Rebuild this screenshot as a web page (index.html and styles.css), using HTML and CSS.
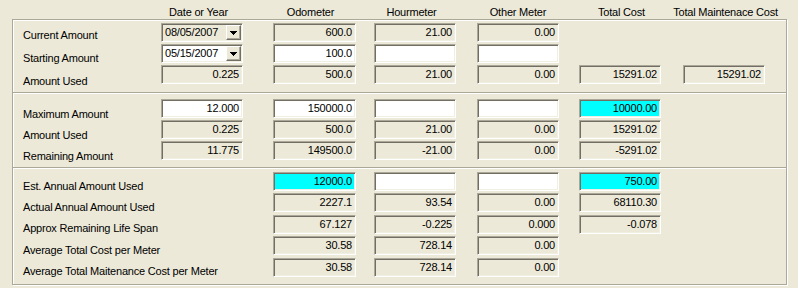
FILE: index.html
```html
<!DOCTYPE html>
<html>
<head>
<meta charset="utf-8">
<link rel="stylesheet" href="styles.css">
</head>
<body>
<div class="page">
  <div class="header">
    <span></span>
    <span class="h h-l">Date or Year</span>
    <span class="h h-l">Odometer</span>
    <span class="h h-l">Hourmeter</span>
    <span class="h">Other Meter</span>
    <span class="h h-r">Total Cost</span>
    <span class="h h-r">Total Maintenace Cost</span>
  </div>
  <div class="group">
    <div class="section s1">
      <div class="labels">
        <span>Current Amount</span>
        <span>Starting Amount</span>
        <span>Amount Used</span>
      </div>
      <div class="fld combo ro c1"><span class="val">08/05/2007</span><span class="btn"><svg width="7" height="4" viewBox="0 0 7 4" shape-rendering="crispEdges"><path d="M0 0H7V1H6V2H5V3H4V4H3V3H2V2H1V1H0Z" fill="#000"/></svg></span></div>
      <div class="fld ro c2">600.0</div>
      <div class="fld ro c3">21.00</div>
      <div class="fld ro c4">0.00</div>
      <div class="fld combo c1"><span class="val">05/15/2007</span><span class="btn"><svg width="7" height="4" viewBox="0 0 7 4" shape-rendering="crispEdges"><path d="M0 0H7V1H6V2H5V3H4V4H3V3H2V2H1V1H0Z" fill="#000"/></svg></span></div>
      <div class="fld c2">100.0</div>
      <div class="fld c3"></div>
      <div class="fld c4"></div>
      <div class="fld ro c1">0.225</div>
      <div class="fld ro c2">500.0</div>
      <div class="fld ro c3">21.00</div>
      <div class="fld ro c4">0.00</div>
      <div class="fld ro c5">15291.02</div>
      <div class="fld ro c6">15291.02</div>
    </div>
    <div class="section s2">
      <div class="labels">
        <span>Maximum Amount</span>
        <span>Amount Used</span>
        <span>Remaining Amount</span>
      </div>
      <div class="fld c1">12.000</div>
      <div class="fld c2">150000.0</div>
      <div class="fld c3"></div>
      <div class="fld c4"></div>
      <div class="fld hl c5">10000.00</div>
      <div class="fld ro c1">0.225</div>
      <div class="fld ro c2">500.0</div>
      <div class="fld ro c3">21.00</div>
      <div class="fld ro c4">0.00</div>
      <div class="fld ro c5">15291.02</div>
      <div class="fld ro c1">11.775</div>
      <div class="fld ro c2">149500.0</div>
      <div class="fld ro c3">-21.00</div>
      <div class="fld ro c4">0.00</div>
      <div class="fld ro c5">-5291.02</div>
    </div>
    <div class="section s3">
      <div class="labels">
        <span>Est. Annual Amount Used</span>
        <span>Actual Annual Amount Used</span>
        <span>Approx Remaining Life Span</span>
        <span>Average Total Cost per Meter</span>
        <span>Average Total Maitenance Cost per Meter</span>
      </div>
      <div class="fld hl c2">12000.0</div>
      <div class="fld c3"></div>
      <div class="fld c4"></div>
      <div class="fld hl c5">750.00</div>
      <div class="fld ro c2">2227.1</div>
      <div class="fld ro c3">93.54</div>
      <div class="fld ro c4">0.00</div>
      <div class="fld ro c5">68110.30</div>
      <div class="fld ro c2">67.127</div>
      <div class="fld ro c3">-0.225</div>
      <div class="fld ro c4">0.000</div>
      <div class="fld ro c5">-0.078</div>
      <div class="fld ro c2">30.58</div>
      <div class="fld ro c3">728.14</div>
      <div class="fld ro c4">0.00</div>
      <div class="fld ro c2">30.58</div>
      <div class="fld ro c3">728.14</div>
      <div class="fld ro c4">0.00</div>
    </div>
  </div>
</div>
</body>
</html>
```

FILE: styles.css
```css
html, body {
  margin: 0;
  padding: 0;
  background: #ECE9D8;
}
body {
  width: 798px;
  height: 288px;
  overflow: hidden;
  font-family: "Liberation Sans", Arial, sans-serif;
  font-size: 11px;
  letter-spacing: -0.2px;
  color: #000;
}
.header,
.section {
  display: grid;
  grid-template-columns: 148px 112px 101px 103px 102px 104px 82px;
}
.header {
  padding-left: 13px;
  height: 19px;
  box-sizing: border-box;
  padding-top: 6px;
  line-height: 13px;
}
.h {
  width: 82px;
  box-sizing: border-box;
  display: flex;
  justify-content: center;
  white-space: nowrap;
}
.h-l { padding-right: 7px; }
.h-r { padding-left: 3px; }
.group {
  margin-left: 12px;
  width: 775px;
  box-sizing: border-box;
  border: 1px solid #ACA899;
  box-shadow: inset 1px 1px 0 #fff, 1px 1px 0 #fff;
}
.section {
  grid-auto-rows: 19px;
  row-gap: 2px;
}
.s1 {
  padding: 3px 0 8px;
}
.s2 {
  padding: 6px 0 7px;
  border-top: 1px solid #ACA899;
  box-shadow: inset 0 1px 0 #fff;
}
.s3 {
  padding: 4px 0 7.4px;
  row-gap: 2.4px;
  border-top: 1px solid #ACA899;
  box-shadow: inset 0 1px 0 #fff;
}
.labels {
  grid-column: 1;
  display: flex;
  flex-direction: column;
  padding-left: 10px;
  white-space: nowrap;
}
.s1 .labels {
  grid-row: 1 / span 3;
  line-height: 23px;
  padding-top: 1px;
}
.s2 .labels {
  grid-row: 1 / span 3;
  line-height: 21px;
  padding-top: 5px;
}
.s3 .labels {
  grid-row: 1 / span 5;
  line-height: 21.4px;
  padding-top: 3.5px;
}
.fld {
  width: 82px;
  height: 19px;
  box-sizing: border-box;
  border: 1px solid;
  border-color: #ACA899 #fff #fff #ACA899;
  box-shadow: inset 1px 1px 0 #716F64, inset -1px -1px 0 #F1EFE2;
  background: #fff;
  padding: 0 3px;
  line-height: 17px;
  text-align: right;
  white-space: nowrap;
  overflow: hidden;
}
.ro { background: #ECE9D8; }
.hl { background: #00FFFF; }
.c1 { grid-column: 2; }
.c2 { grid-column: 3; width: 83px; }
.c3 { grid-column: 4; }
.c4 { grid-column: 5; }
.c5 { grid-column: 6; }
.c6 { grid-column: 7; }
.combo {
  display: flex;
  align-items: center;
  padding: 1px;
  text-align: left;
}
.combo .val {
  flex: 1;
  padding-left: 2px;
}
.btn {
  width: 15px;
  height: 15px;
  box-sizing: border-box;
  border: 1px solid;
  border-color: #fff #716F64 #716F64 #fff;
  box-shadow: inset -1px -1px 0 #ACA899;
  background: #ECE9D8;
  display: flex;
  align-items: center;
  justify-content: center;
}
.btn svg {
  display: block;
  margin-top: 1px;
}
```
